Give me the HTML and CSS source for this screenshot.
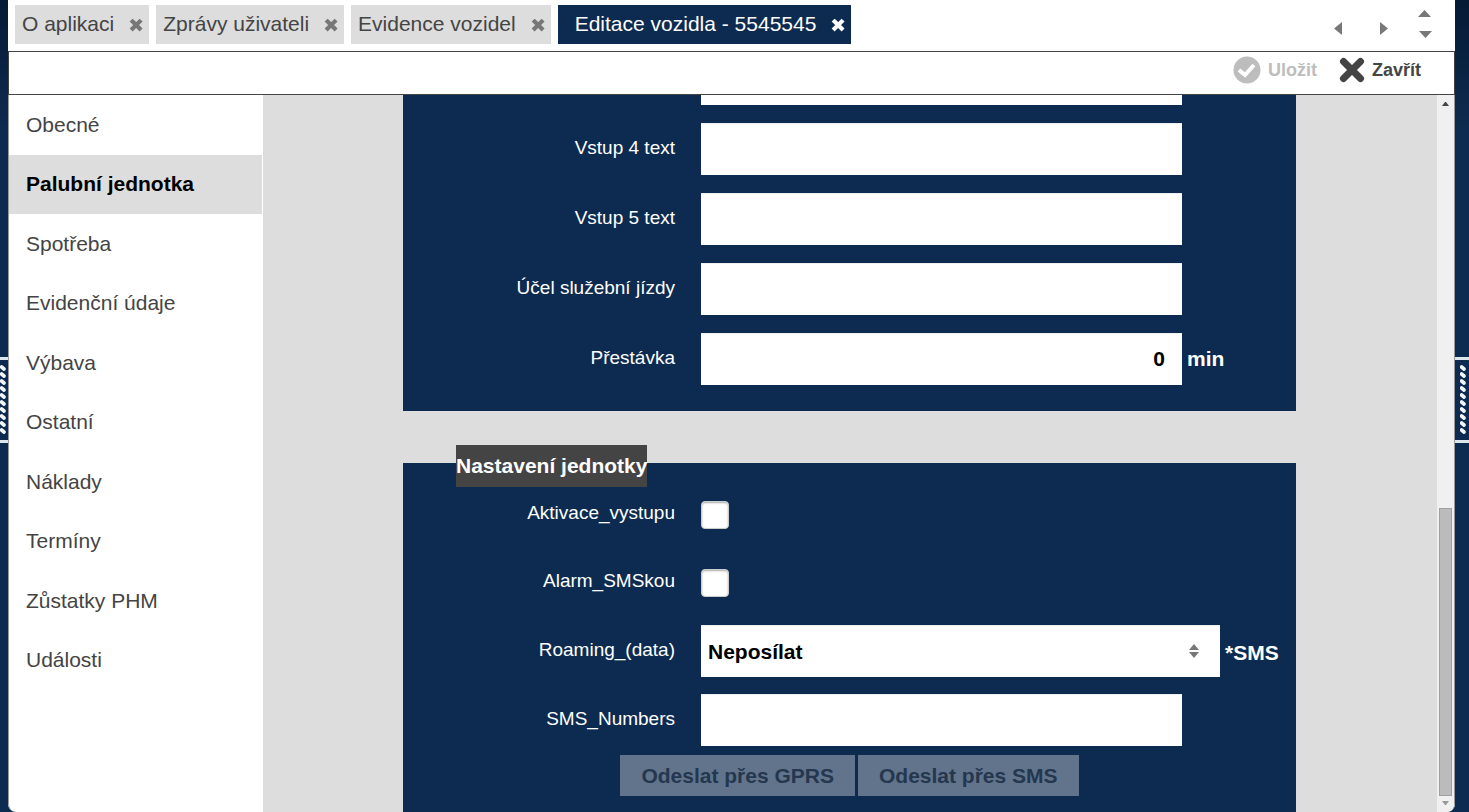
FILE: index.html
```html
<!DOCTYPE html>
<html lang="cs">
<head>
  <meta charset="UTF-8" />
  <meta name="viewport" content="width=device-width, initial-scale=1.0" />
  <title>Editace vozidla - 5545545</title>
  <link rel="stylesheet" href="styles.css">
</head>

<body>
  <!-- shared symbols -->
  <svg class="defs" aria-hidden="true">
    <symbol id="cross" viewBox="0 0 14 14">
      <path d="M3.6 3.6L10.6 10.6M10.6 3.6L3.6 10.6" fill="none" stroke="currentColor" stroke-width="4.2" stroke-linecap="square"/>
    </symbol>
    <symbol id="grip" viewBox="0 0 6 70">
      <g fill="none" stroke="#f2f5f8" stroke-width="3.6" stroke-linecap="round">
        <path d="M1.6 2L4 4M1.6 9L4 11M1.6 16L4 18M1.6 23L4 25M1.6 30L4 32M1.6 37L4 39M1.6 44L4 46M1.6 51L4 53M1.6 58L4 60M1.6 65L4 67"/>
      </g>
    </symbol>
  </svg>

  <div class="gutter gutter-left">
    <button class="grip" type="button" aria-label="Levý panel"><svg width="6" height="70"><use href="#grip"/></svg></button>
  </div>

  <div class="window">
    <!-- tabs -->
    <header class="tabbar">
      <nav class="tabs">
        <div class="tab"><a href="#">O aplikaci</a><button type="button" aria-label="Zavřít záložku"><svg width="14" height="14"><use href="#cross"/></svg></button></div>
        <div class="tab"><a href="#">Zprávy uživateli</a><button type="button" aria-label="Zavřít záložku"><svg width="14" height="14"><use href="#cross"/></svg></button></div>
        <div class="tab"><a href="#">Evidence vozidel</a><button type="button" aria-label="Zavřít záložku"><svg width="14" height="14"><use href="#cross"/></svg></button></div>
        <div class="tab active"><a href="#">Editace vozidla - 5545545</a><button type="button" aria-label="Zavřít záložku"><svg width="14" height="14"><use href="#cross"/></svg></button></div>
      </nav>
      <div class="tab-arrows">
        <button type="button" aria-label="Předchozí"><svg width="8" height="14" viewBox="0 0 8 14"><path d="M8 1V14L0 7.5Z"/></svg></button>
        <button type="button" aria-label="Další"><svg width="8" height="14" viewBox="0 0 8 14"><path d="M0 1V14L8 7.5Z"/></svg></button>
        <button type="button" aria-label="Seznam záložek"><svg width="16" height="28" viewBox="0 0 16 28"><path d="M0 7H13L6.500 0ZM1 21H14L7.500 28Z"/></svg></button>
      </div>
    </header>

    <!-- actions -->
    <div class="toolbar">
      <button class="action" type="button" disabled>
        <svg width="28" height="28" viewBox="0 0 28 28"><circle cx="14" cy="14" r="13.5" fill="#bdbdbd"/><path d="M6 14L12 19L21 9" fill="none" stroke="#fff" stroke-width="4"/></svg>
        Uložit
      </button>
      <button class="action" type="button">
        <svg width="26" height="26" viewBox="0 0 26 26"><path d="M4.500 4.500L21.500 21.500M21.500 4.500L4.500 21.500" fill="none" stroke="#444" stroke-width="7" stroke-linecap="round"/></svg>
        Zavřít
      </button>
    </div>

    <div class="workspace">
      <nav class="sidebar">
        <a href="#">Obecné</a>
        <a class="active" href="#">Palubní jednotka</a>
        <a href="#">Spotřeba</a>
        <a href="#">Evidenční údaje</a>
        <a href="#">Výbava</a>
        <a href="#">Ostatní</a>
        <a href="#">Náklady</a>
        <a href="#">Termíny</a>
        <a href="#">Zůstatky PHM</a>
        <a href="#">Události</a>
      </nav>

      <main class="content">
        <section class="panel panel-inputs">
          <div class="field"><span></span><input type="text" aria-label="Vstup 3 text"></div>
          <div class="field"><label for="in4">Vstup 4 text</label><input id="in4" type="text"></div>
          <div class="field"><label for="in5">Vstup 5 text</label><input id="in5" type="text"></div>
          <div class="field"><label for="purpose">Účel služební jízdy</label><input id="purpose" type="text"></div>
          <div class="field"><label for="pause">Přestávka</label><input id="pause" class="number" type="text" value="0"><span class="unit">min</span></div>
        </section>

        <section class="panel panel-unit">
          <h2>Nastavení jednotky</h2>
          <div class="field"><label for="output">Aktivace_vystupu</label><input id="output" type="checkbox"></div>
          <div class="field"><label for="alarm">Alarm_SMSkou</label><input id="alarm" type="checkbox"></div>
          <div class="field field-select">
            <label for="roaming">Roaming_(data)</label>
            <div class="select">
              <select id="roaming"><option>Neposílat</option></select>
              <svg width="10" height="14" viewBox="0 0 10 14"><path d="M0 6H10L5 0ZM0 8H10L5 14Z"/></svg>
            </div>
            <span class="unit">*SMS</span>
          </div>
          <div class="field"><label for="numbers">SMS_Numbers</label><input id="numbers" type="text"></div>
          <div class="send">
            <button type="button" disabled>Odeslat přes GPRS</button>
            <button type="button" disabled>Odeslat přes SMS</button>
          </div>
        </section>
      </main>

      <div class="scrollbar" aria-hidden="true">
        <svg width="7" height="4" viewBox="0 0 7 4"><path d="M0 4H7L4 0H3Z" fill="#444"/></svg>
        <div class="track"><div class="thumb"></div></div>
        <svg width="7" height="4" viewBox="0 0 7 4"><path d="M0 0H7L4 4H3Z" fill="#999"/></svg>
      </div>
    </div>
  </div>

  <div class="gutter gutter-right">
    <button class="grip" type="button" aria-label="Pravý panel"><svg width="6" height="70"><use href="#grip"/></svg></button>
  </div>
</body>
</html>
```
FILE: styles.css
```css
:root {
  --navy: #0d2b50;
  --grey: #ddd;
  --dark: #444;
}

*, *::before, *::after { box-sizing: border-box; margin: 0; padding: 0; }

body {
  display: grid;
  grid-template-columns: 8px minmax(0, 1fr) 14px;
  height: 100vh;
  overflow: hidden;
  background: linear-gradient(#041a35, var(--navy) 130px);
  font-family: "Liberation Sans", Arial, sans-serif;
  font-size: 21px;
  line-height: 24px;
  color: var(--dark);
}

a { color: inherit; text-decoration: none; }
button { border: 0; background: none; font: inherit; color: inherit; }
svg { display: block; flex: none; fill: currentColor; }
.defs { position: absolute; width: 0; height: 0; }

/* side gutters */
.gutter { padding-top: 357px; overflow: hidden; }
.grip {
  display: flex;
  align-items: center;
  width: 100%;
  height: 86px;
  border-top: 3px solid #dfe7ee;
  border-bottom: 3px solid #dfe7ee;
  background: var(--navy);
}
.gutter-right .grip { padding-left: 5px; }

/* window */
.window {
  display: flex;
  flex-direction: column;
  min-height: 0;
  overflow: hidden;
  background: #fff;
  border-radius: 0 0 8px 8px;
}

.tabbar {
  display: flex;
  justify-content: space-between;
  height: 52px;
  padding: 5px 21px 7px 7px;
  border-bottom: 1px solid var(--dark);
}
.tabs { display: flex; gap: 7px; }
.tab {
  display: flex;
  align-items: center;
  gap: 15px;
  height: 39px;
  padding: 0 6px 0 7px;
  background: var(--grey);
  white-space: nowrap;
}
.tab a { padding-bottom: 1px; }
.tab button { color: #777; }
.tab.active { padding-left: 17px; background: var(--navy); color: #fff; }
.tab.active button { color: #fff; }

.tab-arrows { display: flex; align-items: center; gap: 38px; padding-top: 6px; color: #777; }
.tab-arrows button:last-child { margin-left: -8px; padding-bottom: 8px; }

.toolbar {
  display: flex;
  justify-content: flex-end;
  align-items: center;
  gap: 22px;
  height: 43px;
  padding: 0 33px 6px 0;
  border: solid var(--dark);
  border-width: 0 1px 1px;
}
.action {
  display: flex;
  align-items: center;
  gap: 7px;
  font-size: 18px;
  font-weight: bold;
}
.action:disabled { color: #bdbdbd; }

.workspace {
  display: flex;
  flex: 1;
  min-height: 0;
  border: solid #999;
  border-width: 0 1px;
  border-radius: 0 0 8px 8px;
}

/* sidebar */
.sidebar {
  display: grid;
  grid-auto-rows: 1fr;
  flex: 0 0 254px;
  height: 595px;
  padding-right: 1px;
}
.sidebar a { display: flex; align-items: center; padding-left: 17px; }
.sidebar .active { background: var(--grey); color: #000; font-weight: bold; }

/* form */
.content {
  flex: 1;
  min-width: 0;
  padding: 0 141px 0 140px;
  overflow: hidden;
  background: var(--grey);
}
.panel {
  display: flex;
  flex-direction: column;
  background: var(--navy);
  color: #fff;
}
.panel-inputs { gap: 18px; margin-top: -42px; padding-bottom: 26px; }
.panel-unit { gap: 17px; min-height: 400px; margin-top: 52px; }
.panel h2 {
  align-self: flex-start;
  margin: -18px 0 -15px 53px;
  background: var(--dark);
  font-size: 21px;
  line-height: 42px;
}

.field {
  display: grid;
  grid-template-columns: 272px minmax(0, 481px) auto;
  justify-content: start;
  align-items: center;
  min-height: 51px;
}
.field-select { grid-template-columns: 272px minmax(0, 519px) auto; }
.field > :nth-child(2) { margin-left: 26px; margin-right: -26px; }
.field label { padding-bottom: 3px; font-size: 19px; text-align: right; }
.field .unit { margin-left: 31px; font-weight: bold; }
.field-select .unit { padding-top: 4px; }

input[type="text"], select {
  width: 100%;
  height: 52px;
  padding: 0 17px 0 7px;
  border: 0;
  border-radius: 0;
  background: #fff;
  box-shadow: inset 0 1px 1px #eee;
  color: #000;
  font: bold 21px "Liberation Sans", Arial, sans-serif;
}
.number { text-align: right; }

input[type="checkbox"] {
  appearance: none;
  width: 28px;
  height: 28px;
  border: 1px solid #ccc;
  border-radius: 4px;
  background: #fff;
  box-shadow: inset 0 1px 2px #aaa;
}

.select { display: grid; align-items: center; }
.select > * { grid-area: 1 / 1; }
.select select { appearance: none; }
.select svg { justify-self: end; margin-right: 21px; color: #777; pointer-events: none; }

.send { display: flex; justify-content: center; gap: 3px; margin-top: -8px; }
.send button {
  height: 41px;
  padding: 0 21px;
  background: #62748c;
  color: #24374f;
  font-weight: bold;
}

/* scrollbar */
.scrollbar {
  display: flex;
  flex-direction: column;
  align-items: center;
  width: 17px;
  padding: 7px 0;
  background: #f0f0f0;
  border-radius: 0 0 8px 0;
}
.track {
  display: flex;
  flex-direction: column;
  justify-content: flex-end;
  flex: 1;
  width: 13px;
  padding: 5px 0;
}
.thumb { height: 42%; border: 1px solid #a0a0a0; background: #bbb; }
```
